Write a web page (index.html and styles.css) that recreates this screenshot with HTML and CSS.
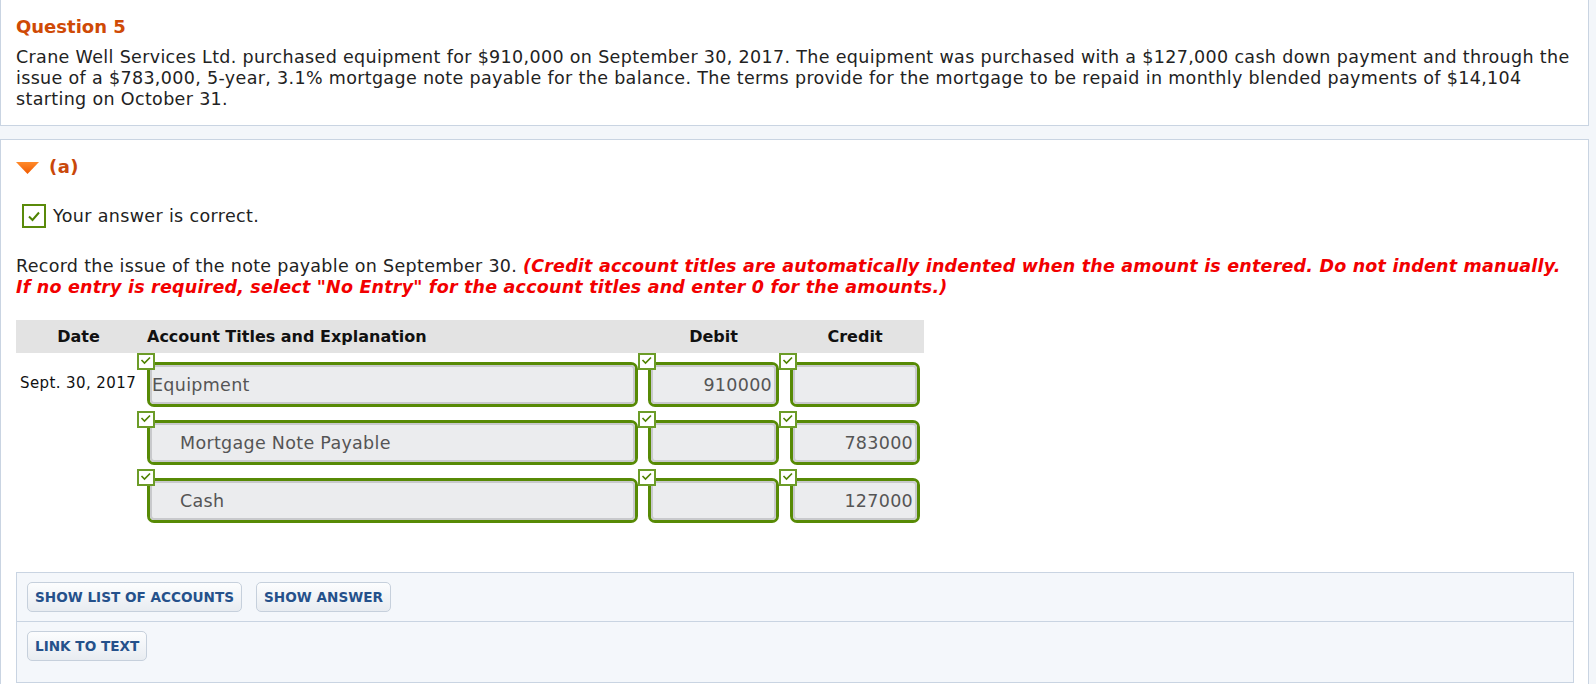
FILE: index.html
```html
<!DOCTYPE html>
<html lang="en">
<head>
<meta charset="utf-8">
<title>Question 5</title>
<link rel="stylesheet" href="styles.css">
</head>
<body>
<div class="question-box">
  <h2 class="q-title">Question 5</h2>
  <p class="q-text">Crane Well Services Ltd. purchased equipment for $910,000 on September 30, 2017. The equipment was purchased with a $127,000 cash down payment and through the<br>issue of a $783,000, 5-year, 3.1% mortgage note payable for the balance. The terms provide for the mortgage to be repaid in monthly blended payments of $14,104<br>starting on October 31.</p>
</div>

<div class="part-box">
  <div class="part-head">
    <svg class="tri" width="23" height="12" viewBox="0 0 23 12">
      <defs>
        <linearGradient id="tg" x1="0" y1="0" x2="0" y2="1">
          <stop offset="0" stop-color="#ff8a2a"/>
          <stop offset="1" stop-color="#f05a00"/>
        </linearGradient>
      </defs>
      <polygon points="0,0 23,0 11.5,12" fill="url(#tg)"/>
    </svg>
    <span class="part-label">(a)</span>
  </div>

  <div class="correct">
    <span class="cbox"><svg width="20" height="20" viewBox="0 0 20 20"><path d="M5 10.5 L8.5 14 L15 6.5" fill="none" stroke="#4e8200" stroke-width="2"/></svg></span>
    <span>Your answer is correct.</span>
  </div>

  <p class="instr">Record the issue of the note payable on September 30. <em class="red">(Credit account titles are automatically indented when the amount is entered. Do not indent manually.<br>If no entry is required, select "No Entry" for the account titles and enter 0 for the amounts.)</em></p>

  <div class="journal">
    <div class="jhead">
      <div class="jh-date">Date</div>
      <div class="jh-acct">Account Titles and Explanation</div>
      <div class="jh-num">Debit</div>
      <div class="jh-num jh-credit">Credit</div>
    </div>

    <div class="jrow">
      <div class="jdate">Sept. 30, 2017</div>
      <div class="jcell">
        <span class="tick"><svg width="14" height="13" viewBox="0 0 14 13"><path d="M2.5 5 L5.5 8 L11 2.5" fill="none" stroke="#4e8200" stroke-width="1.6"/></svg></span>
        <div class="field acct"><div class="inner">Equipment</div></div>
      </div>
      <div class="jcell">
        <span class="tick"><svg width="14" height="13" viewBox="0 0 14 13"><path d="M2.5 5 L5.5 8 L11 2.5" fill="none" stroke="#4e8200" stroke-width="1.6"/></svg></span>
        <div class="field debit"><div class="inner num">910000</div></div>
      </div>
      <div class="jcell">
        <span class="tick"><svg width="14" height="13" viewBox="0 0 14 13"><path d="M2.5 5 L5.5 8 L11 2.5" fill="none" stroke="#4e8200" stroke-width="1.6"/></svg></span>
        <div class="field credit"><div class="inner num"></div></div>
      </div>
    </div>

    <div class="jrow">
      <div class="jdate"></div>
      <div class="jcell">
        <span class="tick"><svg width="14" height="13" viewBox="0 0 14 13"><path d="M2.5 5 L5.5 8 L11 2.5" fill="none" stroke="#4e8200" stroke-width="1.6"/></svg></span>
        <div class="field acct"><div class="inner indent">Mortgage Note Payable</div></div>
      </div>
      <div class="jcell">
        <span class="tick"><svg width="14" height="13" viewBox="0 0 14 13"><path d="M2.5 5 L5.5 8 L11 2.5" fill="none" stroke="#4e8200" stroke-width="1.6"/></svg></span>
        <div class="field debit"><div class="inner num"></div></div>
      </div>
      <div class="jcell">
        <span class="tick"><svg width="14" height="13" viewBox="0 0 14 13"><path d="M2.5 5 L5.5 8 L11 2.5" fill="none" stroke="#4e8200" stroke-width="1.6"/></svg></span>
        <div class="field credit"><div class="inner num">783000</div></div>
      </div>
    </div>

    <div class="jrow">
      <div class="jdate"></div>
      <div class="jcell">
        <span class="tick"><svg width="14" height="13" viewBox="0 0 14 13"><path d="M2.5 5 L5.5 8 L11 2.5" fill="none" stroke="#4e8200" stroke-width="1.6"/></svg></span>
        <div class="field acct"><div class="inner indent">Cash</div></div>
      </div>
      <div class="jcell">
        <span class="tick"><svg width="14" height="13" viewBox="0 0 14 13"><path d="M2.5 5 L5.5 8 L11 2.5" fill="none" stroke="#4e8200" stroke-width="1.6"/></svg></span>
        <div class="field debit"><div class="inner num"></div></div>
      </div>
      <div class="jcell">
        <span class="tick"><svg width="14" height="13" viewBox="0 0 14 13"><path d="M2.5 5 L5.5 8 L11 2.5" fill="none" stroke="#4e8200" stroke-width="1.6"/></svg></span>
        <div class="field credit"><div class="inner num">127000</div></div>
      </div>
    </div>
  </div>

  <div class="panel">
    <div class="panel-row">
      <button class="btn">SHOW LIST OF ACCOUNTS</button>
      <button class="btn">SHOW ANSWER</button>
    </div>
    <div class="panel-row last">
      <button class="btn">LINK TO TEXT</button>
    </div>
  </div>
</div>
</body>
</html>
```

FILE: styles.css
```css
html, body {
  margin: 0;
  padding: 0;
}
body {
  background: #f3f6fa;
  font-family: "DejaVu Sans", Verdana, sans-serif;
  color: #222;
  overflow: hidden;
}

.question-box {
  width: 1589px;
  box-sizing: border-box;
  background: #fff;
  border: 1px solid #c9d4e2;
  border-top: none;
  padding: 16px 15px 15px 15px;
}
.q-title {
  margin: 0;
  font-size: 18px;
  line-height: 22px;
  font-weight: bold;
  color: #cf4a06;
}
.q-text {
  margin: 9px 0 0 0;
  font-size: 17.5px;
  line-height: 21px;
  letter-spacing: 0.34px;
  white-space: nowrap;
}

.part-box {
  margin-top: 13px;
  width: 1589px;
  height: 600px;
  box-sizing: border-box;
  background: #fff;
  border: 1px solid #c9d4e2;
  padding: 16px 15px 0 15px;
}
.part-head {
  display: flex;
  align-items: center;
  height: 22px;
  gap: 10px;
}
.tri {
  display: block;
  margin-top: 2px;
}
.part-label {
  font-size: 18px;
  line-height: 22px;
  font-weight: bold;
  color: #c9480a;
  letter-spacing: 0.4px;
}

.correct {
  margin-top: 26px;
  margin-left: 6px;
  display: flex;
  align-items: center;
  gap: 7px;
  font-size: 17.5px;
  line-height: 24px;
  letter-spacing: 0.35px;
}
.cbox {
  width: 24px;
  height: 24px;
  box-sizing: border-box;
  border: 2px solid #5a8a0a;
  background: #fff;
  display: flex;
  align-items: center;
  justify-content: center;
}
.cbox svg { display: block; }

.instr {
  margin: 28px 0 0 0;
  font-size: 17.5px;
  line-height: 21px;
  letter-spacing: 0.3px;
  white-space: nowrap;
}
.red {
  color: #f20000;
  font-weight: bold;
  font-style: italic;
  letter-spacing: 0.2px;
}

.journal {
  margin-top: 22px;
  width: 908px;
}
.jhead {
  display: grid;
  grid-template-columns: 121px 501px 141px 145px;
  height: 33px;
  background: #e3e3e3;
  font-weight: bold;
  font-size: 16px;
  line-height: 33px;
  color: #111;
}
.jh-date {
  text-align: center;
  padding-left: 4px;
}
.jh-acct {
  padding-left: 10px;
}
.jh-num {
  padding-left: 10px;
  width: 131px;
  text-align: center;
}
.jh-credit {
  padding-left: 11px;
  width: 130px;
}

.jrow {
  display: grid;
  grid-template-columns: 121px 501px 141px 145px;
  height: 58px;
}
.jdate {
  padding-top: 21px;
  padding-left: 4px;
  font-size: 15px;
  line-height: 18px;
  letter-spacing: 0.4px;
  color: #111;
  white-space: nowrap;
}
.jcell {
  position: relative;
}
.tick {
  position: absolute;
  left: 0;
  top: 0;
  width: 18px;
  height: 17px;
  box-sizing: border-box;
  border: 2px solid #6c9c28;
  background: #fff;
  z-index: 2;
  display: flex;
  align-items: flex-start;
  justify-content: center;
}
.tick svg { display: block; }

.field {
  margin-top: 9px;
  margin-left: 10px;
  height: 45px;
  box-sizing: border-box;
  border: 3px solid #578a05;
  border-radius: 7px;
  background: #fff;
}
.field.acct { width: 491px; }
.field.debit { width: 131px; }
.field.credit { width: 130px; margin-left: 11px; }

.inner {
  height: 100%;
  box-sizing: border-box;
  border: 2px solid #c8c9cc;
  border-radius: 4px;
  background: #ebecee;
  display: flex;
  align-items: center;
  padding: 0 1px 0 0;
  font-size: 17.5px;
  letter-spacing: 0.3px;
  color: #555;
  white-space: nowrap;
}
.inner.indent { padding-left: 28px; }
.inner.num {
  justify-content: flex-end;
  padding-right: 2px;
}

.panel {
  margin-top: 45px;
  width: 1558px;
  box-sizing: border-box;
  background: #f4f7fb;
  border: 1px solid #c9d4e2;
}
.panel-row {
  display: flex;
  gap: 14px;
  padding: 9px 10px 9px 10px;
  border-bottom: 1px solid #c9d4e2;
}
.panel-row.last {
  border-bottom: none;
  padding-bottom: 21px;
}
.btn {
  height: 30px;
  padding: 0 7px;
  border: 1px solid #c6d0dc;
  border-radius: 5px;
  background: linear-gradient(#fcfdfe, #e8ecf1);
  font-family: "DejaVu Sans", Verdana, sans-serif;
  font-weight: bold;
  font-size: 13.6px;
  color: #25518b;
  cursor: pointer;
}
```
